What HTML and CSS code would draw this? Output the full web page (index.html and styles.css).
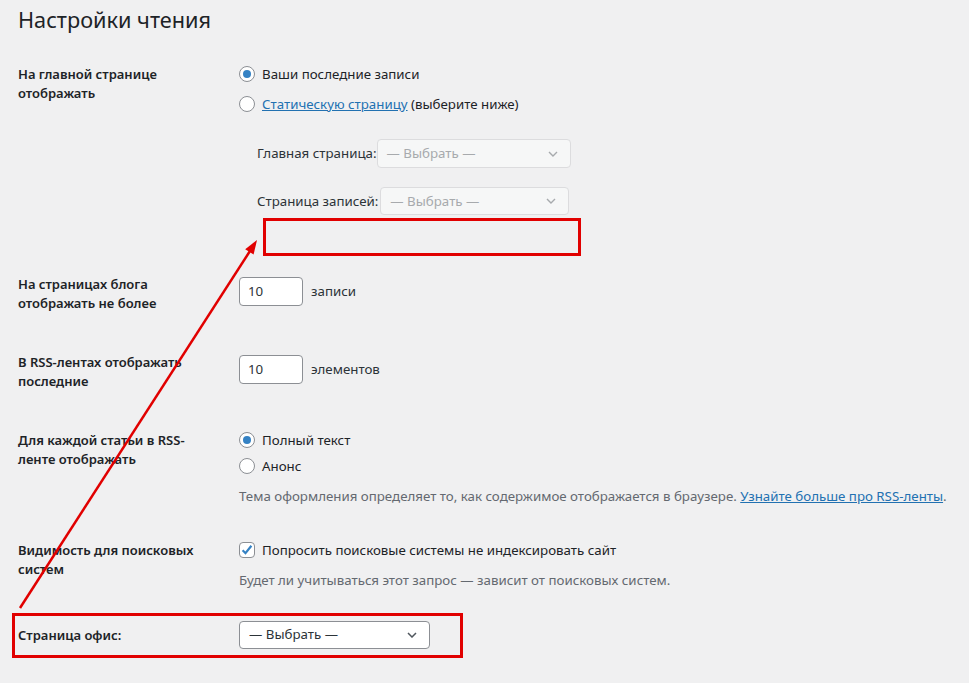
FILE: index.html
```html
<!DOCTYPE html>
<html lang="ru">
<head>
<meta charset="utf-8">
<title>Настройки чтения</title>
<link rel="stylesheet" href="styles.css">
</head>
<body>
<div class="wrap">
  <h1 class="title">Настройки чтения</h1>
  <div class="table">
    <div class="row">
      <div class="th">На главной странице<br>отображать</div>
      <div class="td">
        <div class="opts">
          <div class="opt"><span class="radio checked"></span><span>Ваши последние записи</span></div>
          <div class="opt"><span class="radio"></span><span><a class="link" href="#">Статическую страницу</a> (выберите ниже)</span></div>
        </div>
        <div class="subs">
          <div class="sub"><span class="sub-label">Главная страница:</span><div class="select disabled sel-front"><span>— Выбрать —</span><svg class="chev" width="10" height="6" viewBox="0 0 10 6"><path d="M1 1l4 4 4-4" fill="none" stroke="currentColor" stroke-width="1.4"/></svg></div></div>
          <div class="sub sub2"><span class="sub-label">Страница записей:</span><div class="select disabled sel-posts"><span>— Выбрать —</span><svg class="chev" width="10" height="6" viewBox="0 0 10 6"><path d="M1 1l4 4 4-4" fill="none" stroke="currentColor" stroke-width="1.4"/></svg></div></div>
        </div>
      </div>
    </div>

    <div class="row">
      <div class="th">На страницах блога<br>отображать не более</div>
      <div class="td td-input">
        <div class="inline"><span class="num">10</span><span>записи</span></div>
      </div>
    </div>

    <div class="row">
      <div class="th">В RSS-лентах отображать<br>последние</div>
      <div class="td td-input">
        <div class="inline"><span class="num">10</span><span>элементов</span></div>
      </div>
    </div>

    <div class="row">
      <div class="th">Для каждой статьи в RSS-<br>ленте отображать</div>
      <div class="td">
        <div class="opts opts-tight">
          <div class="opt"><span class="radio checked"></span><span>Полный текст</span></div>
          <div class="opt"><span class="radio"></span><span>Анонс</span></div>
        </div>
        <p class="desc">Тема оформления определяет то, как содержимое отображается в браузере. <a class="link" href="#">Узнайте больше про RSS-ленты</a>.</p>
      </div>
    </div>

    <div class="row">
      <div class="th">Видимость для поисковых<br>систем</div>
      <div class="td">
        <div class="opt"><span class="check"><svg width="14" height="14" viewBox="0 0 14 14"><path d="M2.6 7.2l2.9 3 5.9-7.4" fill="none" stroke="#3582c4" stroke-width="2.2"/></svg></span><span>Попросить поисковые системы не индексировать сайт</span></div>
        <p class="desc desc2">Будет ли учитываться этот запрос — зависит от поисковых систем.</p>
      </div>
    </div>

    <div class="row row-last">
      <div class="th">Страница офис:</div>
      <div class="td td-select">
        <div class="select sel-office"><span>— Выбрать —</span><svg class="chev" width="10" height="6" viewBox="0 0 10 6"><path d="M1 1l4 4 4-4" fill="none" stroke="currentColor" stroke-width="1.5"/></svg></div>
      </div>
    </div>
  </div>
</div>

<svg class="overlay" width="969" height="683" viewBox="0 0 969 683">
  <rect x="264.5" y="219.5" width="315" height="35" fill="none" stroke="#e10000" stroke-width="3"/>
  <rect x="13.5" y="614.5" width="448" height="42" fill="none" stroke="#e10000" stroke-width="3"/>
  <line x1="20" y1="608" x2="250" y2="251" stroke="#e10000" stroke-width="2.5"/>
  <polygon points="257,240 253.6,254.6 245.2,249.2" fill="#e10000"/>
</svg>
</body>
</html>
```
FILE: styles.css
```css
html, body {
  margin: 0;
  padding: 0;
}
body {
  background: #f0f0f1;
  color: #1d2327;
  font-family: "Noto Sans", "Open Sans", sans-serif;
  font-size: 13.3px;
  line-height: 19px;
  width: 969px;
  height: 683px;
  overflow: hidden;
  position: relative;
}
.wrap {
  padding-left: 18px;
}
.title {
  margin: 0;
  padding: 5px 0 0;
  height: 44.5px;
  box-sizing: border-box;
  font-size: 21.7px;
  line-height: 30px;
  font-weight: 400;
  color: #1d2327;
}
.row {
  display: grid;
  grid-template-columns: 221px 1fr;
}
.th {
  padding: 20px 0;
  font-size: 13px;
  font-weight: 600;
  line-height: 19px;
  white-space: nowrap;
}
.td {
  padding: 20px 0 15px;
}
.td-input {
  padding-top: 22.5px;
}
.opts {
  display: flex;
  flex-direction: column;
  gap: 11px;
}
.opts-tight {
  gap: 7px;
}
.opt {
  display: flex;
  align-items: center;
  gap: 7px;
  height: 19px;
  white-space: nowrap;
}
.radio {
  width: 16px;
  height: 16px;
  box-sizing: border-box;
  border: 1px solid #8c8f94;
  border-radius: 50%;
  background: #fff;
  display: inline-flex;
  align-items: center;
  justify-content: center;
  flex: none;
}
.radio.checked::before {
  content: "";
  width: 8px;
  height: 8px;
  border-radius: 50%;
  background: #3582c4;
}
.check {
  width: 16px;
  height: 16px;
  box-sizing: border-box;
  border: 1px solid #8c8f94;
  border-radius: 4px;
  background: #fff;
  display: inline-flex;
  align-items: center;
  justify-content: center;
  flex: none;
}
.link {
  color: #2271b1;
  text-decoration: underline;
}
.subs {
  display: flex;
  flex-direction: column;
  gap: 19px;
  padding-left: 18px;
  margin-top: 25.5px;
  padding-bottom: 24.5px;
}
.sub {
  display: flex;
  align-items: center;
  gap: 0;
  white-space: nowrap;
}
.sub-label {
  color: #2c3338;
}
.select {
  display: flex;
  align-items: center;
  justify-content: space-between;
  box-sizing: border-box;
  height: 29px;
  padding: 0 12px 0 9px;
  border: 1px solid #8c8f94;
  border-radius: 4px;
  background: #fff;
  color: #2c3338;
}
.select.disabled {
  border-color: #dcdcde;
  background: #f6f7f7;
  color: #a7aaad;
}
.select.disabled .chev {
  color: #a7aaad;
}
.sel-front {
  width: 194px;
}
.sel-posts {
  width: 189px;
  height: 28px;
}
.sub2 .sub-label {
  margin-right: 2px;
}
.chev {
  color: #50575e;
  flex: none;
}
.inline {
  display: flex;
  align-items: center;
  gap: 8px;
  color: #2c3338;
}
.num {
  display: flex;
  align-items: center;
  box-sizing: border-box;
  width: 64px;
  height: 29px;
  padding: 0 8px;
  border: 1px solid #8c8f94;
  border-radius: 4px;
  background: #fff;
  color: #2c3338;
}
.desc {
  margin: 11px 0 0;
  color: #646970;
  white-space: nowrap;
}
.desc2 {
  margin-top: 11px;
}
.td-select {
  padding: 16px 0 15px;
}
.row-last {
  align-items: start;
}
.row-last .th {
  padding-top: 21px;
}
.sel-office {
  width: 191px;
  height: 28px;
}
.overlay {
  position: absolute;
  left: 0;
  top: 0;
  pointer-events: none;
}
```
